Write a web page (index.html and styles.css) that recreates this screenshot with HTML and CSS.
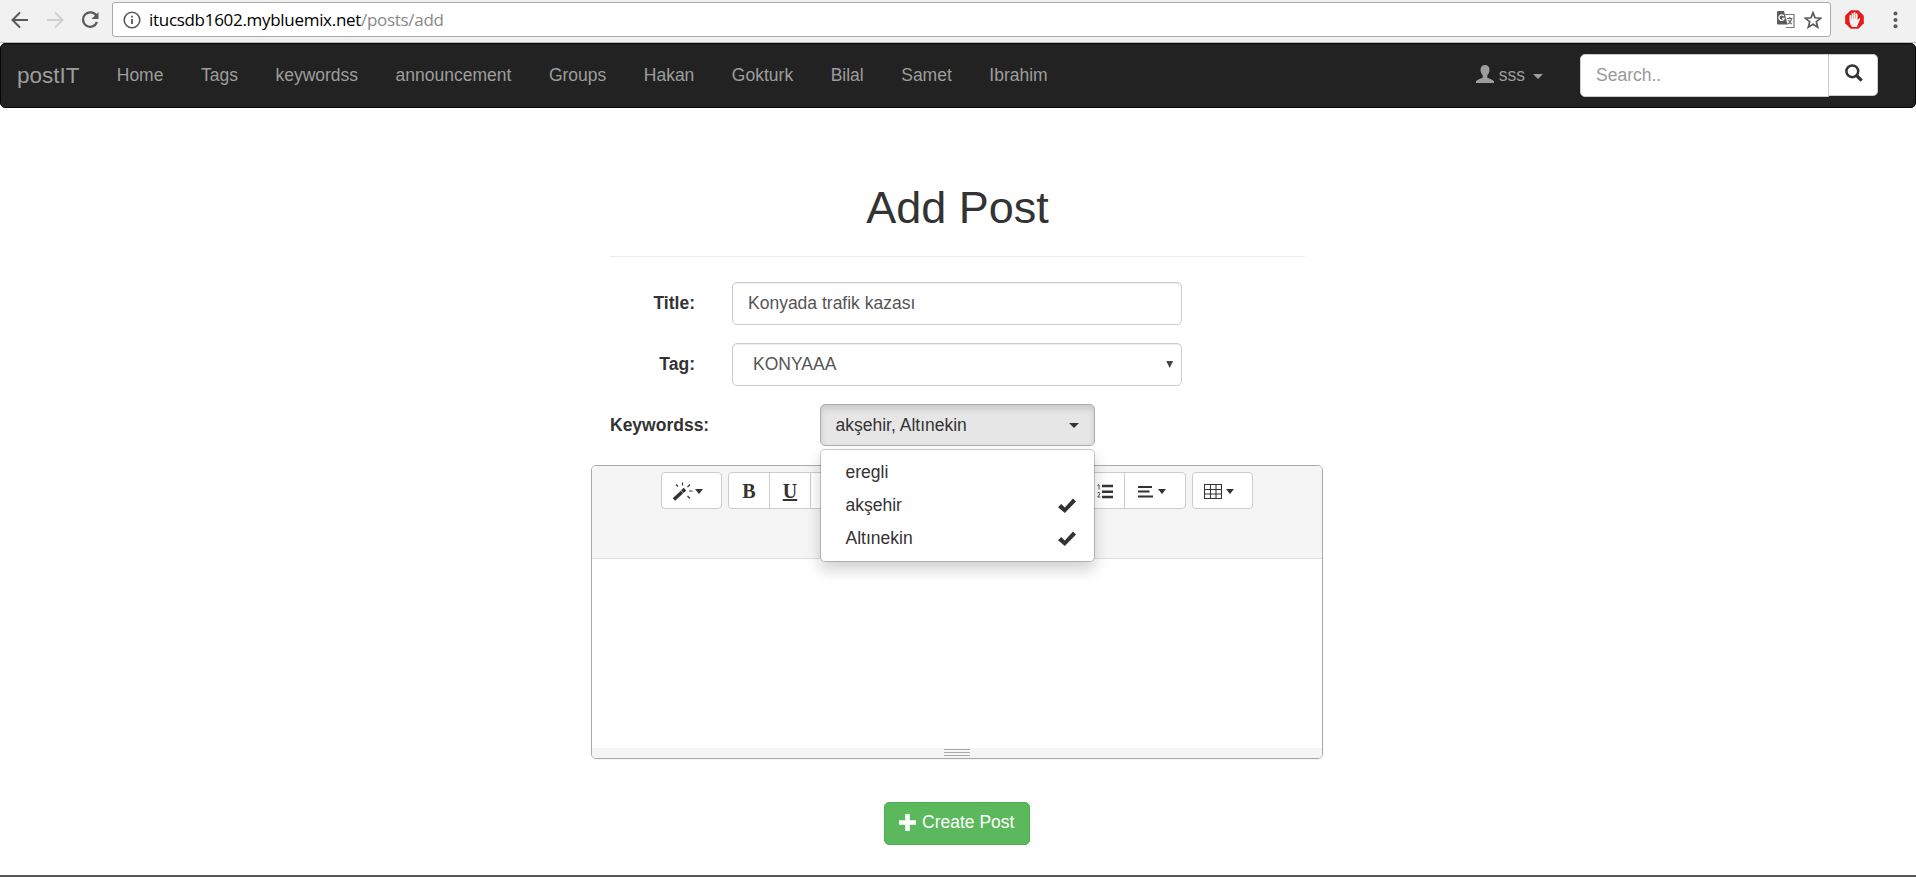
FILE: index.html
```html
<!DOCTYPE html>
<html lang="en">
<head>
<meta charset="utf-8">
<title>Add Post</title>
<link rel="stylesheet" href="styles.css">
</head>
<body>
<div class="browser">
  <svg class="ico back" width="18" height="18" viewBox="0 0 18 18"><path d="M17 9H2M9 1.5 1.5 9 9 16.5" fill="none" stroke="#5a5a5a" stroke-width="2"/></svg>
  <svg class="ico forward" width="18" height="18" viewBox="0 0 18 18"><path d="M1 9h15M9 1.5 16.500 9 9 16.500" fill="none" stroke="#d0d0d0" stroke-width="2"/></svg>
  <svg class="ico reload" width="18" height="18" viewBox="0 0 18 18"><path d="M15.500 5A7.200 7.200 0 1 0 16 11" fill="none" stroke="#5a5a5a" stroke-width="2.200"/><path d="M17.500 1v7h-7z" fill="#5a5a5a"/></svg>
  <div class="address">
    <svg class="info" width="18" height="18" viewBox="0 0 18 18"><circle cx="9" cy="9" r="7.800" fill="none" stroke="#5a5a5a" stroke-width="1.600"/><path d="M9 8v5M9 4.800v1.800" stroke="#5a5a5a" stroke-width="1.800"/></svg>
    <span class="url"><span class="host">itucsdb1602.mybluemix.net</span><span class="path">/posts/add</span></span>
    <svg class="translate" width="18" height="18" viewBox="0 0 18 18"><path d="M8 3.500h9v13H9" fill="#fff" stroke="#777" stroke-width="1.200"/><path d="M1 0h6l3.500 13.500H1a1 1 0 0 1-1-1V1a1 1 0 0 1 1-1z" fill="#5a5a5a"/><path d="M10 7.500h5.500M12.800 6v1.500M14.500 8q-1 4-4 5M11.500 9q1 3 3.500 4" fill="none" stroke="#666" stroke-width="1.100"/><path d="M6.800 5A2.700 2.700 0 1 0 7.300 7.300H5" fill="none" stroke="#fff" stroke-width="1.300"/></svg>
    <svg class="star" width="18" height="18" viewBox="0 0 18 18"><path d="M9 1.600 11 6.800l5.600.4-4.300 3.500 1.400 5.500L9 13.200l-4.700 3 1.400-5.500L1.400 7.200 7 6.800z" fill="none" stroke="#5a5a5a" stroke-width="1.700"/></svg>
  </div>
  <svg class="block" width="19" height="19" viewBox="0 0 19 19"><path d="M5.700.2h7.600l5.500 5.500v7.600l-5.500 5.500H5.700L.2 13.300V5.700z" fill="#e21b1b"/><path d="M4.500 11V5.500q.9-1 1.800 0V9h.3V3.500q.9-1 1.800 0V8.500h.3V2.600q.9-1 1.800 0v5.900h.3V3.800q.9-1 1.800 0V10l1.700-1.800q1.200-.2 1 .9L12.800 14.500 12 17H7L5.200 14.200z" fill="#f4f0ee"/></svg>
  <svg class="dots" width="5" height="18" viewBox="0 0 5 18"><g fill="#5a5a5a"><circle cx="2.500" cy="2.500" r="2"/><circle cx="2.500" cy="9" r="2"/><circle cx="2.500" cy="15.300" r="2"/></g></svg>
</div>
<nav class="navbar">
  <a class="brand">postIT</a>
  <a class="nav-link">Home</a><a class="nav-link">Tags</a><a class="nav-link">keywordss</a><a class="nav-link">announcement</a><a class="nav-link">Groups</a><a class="nav-link">Hakan</a><a class="nav-link">Gokturk</a><a class="nav-link">Bilal</a><a class="nav-link">Samet</a><a class="nav-link">Ibrahim</a>
  <div class="user">
    <svg class="person" width="18" height="18" viewBox="0 0 18 18"><path d="M9 0c2.800 0 4.500 1.800 4.500 4.800 0 2-.8 4-2.200 5.400v2.200c0 .6 6.500 2.200 6.700 4.200V18H0v-1.400c.2-2 6.700-3.600 6.700-4.200v-2.200C5.300 8.800 4.500 6.800 4.500 4.800 4.500 1.800 6.200 0 9 0z" fill="#9d9d9d"/></svg>
    <span>sss</span><i class="caret"></i>
  </div>
  <div class="search">
    <div class="search-field">Search..</div>
    <div class="search-btn"><svg width="18" height="18" viewBox="0 0 18 18"><circle cx="7.300" cy="7.300" r="5.900" fill="none" stroke="#333" stroke-width="2.500"/><path d="m11.500 11.500 5.200 5.200" stroke="#333" stroke-width="3.200"/></svg></div>
  </div>
</nav>
<main class="page">
  <h1>Add Post</h1>
  <div class="row"><label>Title:</label><div class="control">Konyada trafik kazası</div></div>
  <div class="row tag-row"><label>Tag:</label><div class="control select">KONYAAA<svg width="8" height="9" viewBox="0 0 8 9"><path d="M.3 1h6.800L3.700 8z" fill="#444"/></svg></div></div>
  <div class="row keys"><label>Keywordss:</label>
    <div class="picker">
      <span>akşehir, Altınekin</span><i class="caret"></i>
      <ul class="menu">
        <li>eregli</li>
        <li>akşehir<svg width="18" height="15" viewBox="0 0 18 15"><path d="M0 9.200 3.200 6l3.600 3.500L15 .5 18 3.500 6.800 15z" fill="#333"/></svg></li>
        <li>Altınekin<svg width="18" height="15" viewBox="0 0 18 15"><path d="M0 9.200 3.200 6l3.600 3.500L15 .5 18 3.500 6.800 15z" fill="#333"/></svg></li>
      </ul>
    </div>
  </div>
  <section class="editor">
    <div class="toolbar">
      <div class="group"><div class="tool wide wand"><svg width="20" height="19" viewBox="0 0 20 19"><path d="m1 17.500 8-7.500" stroke="#333" stroke-width="3.400"/><path d="m9.300 9.600 2.700-2.500" stroke="#333" stroke-width="3.600"/><path d="M9.500.5v3M3 2.500l2 2M17 2.500l-2.500 2.500M16 9h3.500M14.500 14l2.500 2.500" stroke="#333" stroke-width="1.200"/></svg><i class="tri"></i></div></div>
      <div class="group left"><div class="tool b">B</div><div class="tool u">U</div><div class="tool"></div></div>
      <div class="group lists"><div class="tool ol"><svg width="16" height="15" viewBox="0 0 16 15"><path d="M5 2h11M5 7.700h11M5 13h11" stroke="#333" stroke-width="2.400"/><path d="M.5 1.500 2 .5V5.500M.5 9q2-1.500 2.300.3Q2.500 11 .7 13h2.600" fill="none" stroke="#333" stroke-width=".9"/></svg></div><div class="tool wide"><svg width="15" height="13" viewBox="0 0 15 13"><path d="M0 2h14M0 6.500h11.500M0 11.500h15" stroke="#333" stroke-width="2"/></svg><i class="tri"></i></div></div>
      <div class="group"><div class="tool wide"><svg width="18" height="15" viewBox="0 0 18 15"><path d="M.5.5h17v14H.5zM0 5.500h18M0 10h18M6.500 0v15M12 0v15" fill="none" stroke="#333" stroke-width="1.100"/></svg><i class="tri"></i></div></div>
    </div>
    <div class="canvas"></div>
    <div class="resize"><i></i><i></i><i></i></div>
  </section>
  <div class="create"><svg width="17" height="17" viewBox="0 0 17 17"><path d="M6.200 0h4.600v6.200H17v4.600h-6.200V17H6.200v-6.200H0V6.200h6.200z" fill="#fff"/></svg><span>Create Post</span></div>
</main>
</body>
</html>
```
FILE: styles.css
```css
* { box-sizing: border-box; }
body { margin: 0; height: 877px; display: flex; flex-direction: column; overflow: hidden; background: #fff; color: #333; font: 17.5px/25px "Liberation Sans", Arial, sans-serif; border-bottom: 2px solid #555; }
svg { display: block; flex: none; }
.browser { height: 43px; flex: none; display: flex; align-items: center; background: #f1f1f1; border-bottom: 1px solid #b5bab7; padding: 0 18px 3px 11px; }
.forward { margin-left: 17px; }
.reload { margin: 0 13px 0 17px; }
.address { width: 1720px; height: 35px; display: flex; align-items: center; padding: 0 8px 0 10px; background: #fff; border: 1px solid #aaa; border-radius: 3px; }
.url { margin: 0 auto 0 8px; font: 17px/25px "Open Sans", "Noto Sans", sans-serif; letter-spacing: -0.3px; white-space: nowrap; }
.host { color: #000; }
.path { color: #888; }
.translate { margin-right: 9px; }
.block { margin-left: 14px; }
.dots { margin-left: 29px; }
.navbar { height: 65px; flex: none; display: flex; align-items: center; background: #222; color: #9d9d9d; border: 1px solid #080808; border-radius: 5px; padding: 0 37px 0 16px; }
.brand { width: 81px; font-size: 22.5px; }
.nav-link { padding: 0 18.75px; }
.user { margin-left: auto; display: flex; align-items: center; }
.person { margin-bottom: 4px; }
.user span { margin-left: 5px; }
.caret { width: 0; height: 0; border: 5px solid transparent; border-top-color: currentColor; border-bottom: 0; }
.user .caret { margin-left: 8px; margin-top: 2px; }
.search { display: flex; margin-left: 37px; align-items: flex-start; }
.search-field { width: 249px; height: 43px; padding: 8px 15px; background: #fff; border: 1px solid #ccc; border-radius: 5px 0 0 5px; color: #999; }
.search-btn { width: 49px; height: 42px; background: #fff; border: 1px solid #ccc; border-left: 0; border-radius: 0 5px 5px 0; padding: 9px 15px 9px 16px; }
.page { width: 732px; margin: 0 auto; position: relative; left: -1px; display: flex; flex-direction: column; }
h1 { margin: 75px 18px 0 19px; height: 74px; font-size: 45px; font-weight: 400; line-height: 50px; text-align: center; border-bottom: 1px solid #eee; }
.row { display: flex; margin-top: 25px; }
.row label { width: 104px; text-align: right; font-weight: 700; line-height: 25px; padding-top: 9px; }
.control { width: 450px; height: 43px; margin-left: 37px; padding: 8px 15px; border: 1px solid #ccc; border-radius: 5px; box-shadow: inset 0 1px 1px rgba(0,0,0,.075); color: #555; }
.tag-row { margin-top: 18px; }
.select { display: flex; justify-content: space-between; align-items: center; padding: 0 7px 0 20px; }
.keys { margin-top: 18px; }
.keys label { width: 209px; padding-left: 19px; text-align: left; }
.picker { position: relative; width: 275px; height: 42px; margin-left: 20px; display: flex; align-items: center; justify-content: space-between; padding: 0 15px 0 14.500px; background: #e6e6e6; border: 1px solid #adadad; border-radius: 5px; box-shadow: inset 0 4px 6px rgba(0,0,0,.125); }
.menu { position: absolute; z-index: 2; left: -1px; top: 44px; width: 275px; height: 113px; margin: 0; padding: 6px 0; list-style: none; background: #fff; border: 1px solid rgba(0,0,0,.2); border-radius: 5px; background-clip: padding-box; box-shadow: 0 8px 15px rgba(0,0,0,.18); }
.menu li { height: 33px; padding: 4px 18px 4px 24.500px; display: flex; justify-content: space-between; align-items: center; }
.editor { height: 294px; margin-top: 19px; display: flex; flex-direction: column; border: 1px solid #a9a9a9; border-radius: 5px; box-shadow: 0 1px 1px rgba(0,0,0,.05); overflow: hidden; }
.toolbar { height: 93px; flex: none; display: flex; align-items: flex-start; padding: 6px 0 0 69px; gap: 6px; background: #f5f5f5; border-bottom: 1px solid #ddd; }
.group { display: flex; background: #fff; border: 1px solid #ccc; border-radius: 4px; }
.tool { width: 41px; height: 35px; padding-top: 1px; display: flex; align-items: center; justify-content: center; border-left: 1px solid #ccc; }
.tool:first-child { width: 40px; border-left: 0; }
.ol { padding-left: 2px; }
.group .wide { width: 59px; justify-content: flex-start; padding-left: 11px; }
.lists .tool.wide { width: 61px; padding-left: 13px; }
.lists { margin-left: auto; }
.group:last-child { margin-right: 69px; }
.b, .u { font: 700 20px/25px "Liberation Serif", serif; }
.u { text-decoration: underline; }
.tri { margin-left: 5px; border: 4px solid transparent; border-top: 5px solid #333; border-bottom: 0; }
.wide:first-child .tri { margin-left: 4px; }
.wide.wand:first-child .tri { margin-left: 2px; }
.canvas { flex: 1; }
.resize { height: 10px; background: #f5f5f5; display: flex; flex-direction: column; align-items: center; gap: 2px; padding-top: 1px; }
.resize i { width: 26px; height: 1px; background: #a9a9a9; }
.create { align-self: center; width: 146px; height: 43px; margin-top: 43px; display: flex; align-items: center; padding: 0 14px 2px; background: #5cb85c; border: 1px solid #4cae4c; border-radius: 5px; color: #fff; white-space: nowrap; }
.create span { margin-left: 6px; }
```
